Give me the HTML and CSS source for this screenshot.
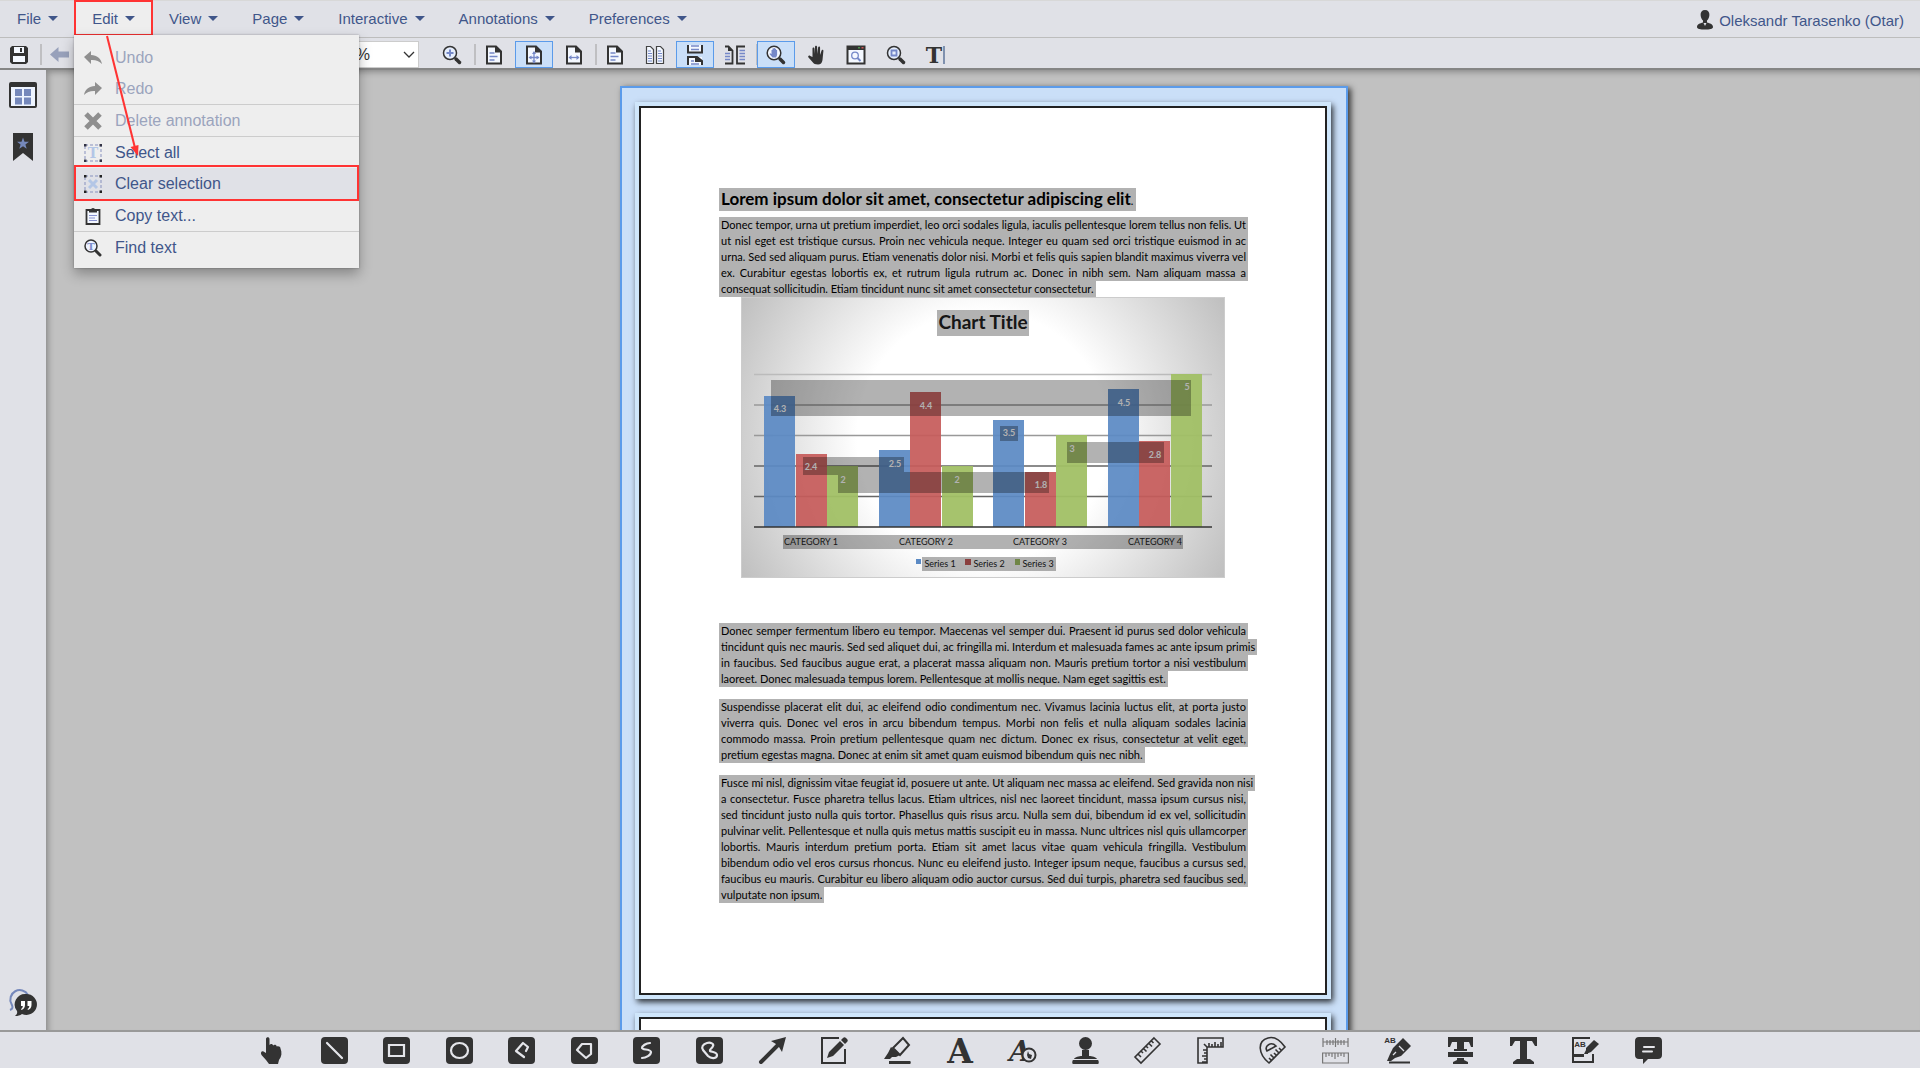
FILE: index.html
```html
<!DOCTYPE html>
<html lang="en">
<head>
    <meta charset="UTF-8">
    <title>Document viewer</title>
    <link rel="stylesheet" href="styles.css">
</head>
<body>
    <nav class="menubar">
        <button class="menu-btn">File</button>
        <button class="menu-btn open">Edit</button>
        <button class="menu-btn">View</button>
        <button class="menu-btn">Page</button>
        <button class="menu-btn">Interactive</button>
        <button class="menu-btn">Annotations</button>
        <button class="menu-btn">Preferences</button>
        <a class="user" href="#">
            <svg width="16" height="20" viewBox="0 0 16 20"><path fill="#333" d="M8 0c3 0 4.600 2 4.400 5-.2 2.800-1.400 4.600-2.400 5.600v2c3 .8 6 1.600 6 4.400 0 2-3.500 2.600-8 2.600S0 19 0 17c0-2.800 3-3.600 6-4.400v-2C5 9.600 3.800 7.800 3.600 5 3.400 2 5 0 8 0z"/><path fill="#e0e1e7" d="M6.500 13h3L8 16z"/></svg>
            <span>Oleksandr Tarasenko (Otar)</span>
        </a>
    </nav>

    <div class="dropdown">
        <button class="item" disabled><svg viewBox="0 0 18 18"><path fill="#8f8f8f" d="M0 8l7-6v4c6 .2 10 3.500 11 9-3-3.200-6-4.200-11-4v4z"/></svg>Undo</button>
        <button class="item" disabled><svg viewBox="0 0 18 18"><path fill="#8f8f8f" d="M18 8l-7-6v4C5 6.200 1 9.500 0 15c3-3.200 6-4.200 11-4v4z"/></svg>Redo</button>
        <hr>
        <button class="item" disabled><svg viewBox="0 0 18 18"><path stroke="#8f8f8f" stroke-width="5" d="M2 2l14 14M16 2L2 16"/></svg>Delete annotation</button>
        <hr>
        <button class="item"><svg viewBox="0 0 18 18"><path fill="none" stroke="#8791be" stroke-dasharray="3 2" d="M1 1h16v16H1z"/><path fill="#334" d="M0 0h2.500v2.500H0zM15.500 0H18v2.500h-2.500zM0 15.500h2.500V18H0zM15.500 15.500H18V18h-2.500z"/><text class="serif" x="9" y="14" font-size="14" fill="#b3c6e6">T</text></svg>Select all</button>
        <button class="item marked"><svg viewBox="0 0 18 18"><path fill="none" stroke="#8791be" stroke-dasharray="3 2" d="M1 1h16v16H1z"/><path fill="#222" d="M0 0h2.500v2.500H0zM15.500 0H18v2.500h-2.500zM0 15.500h2.500V18H0zM15.500 15.500H18V18h-2.500z"/><path stroke="#b3c6e6" stroke-width="3" d="M5 5l8 8M13 5l-8 8"/></svg>Clear selection</button>
        <button class="item"><svg viewBox="0 0 18 18"><path fill="#f4f8ff" stroke="#333" stroke-width="1.800" d="M2.500 3h13v14h-13z"/><path fill="#333" d="M5 5.500V3h2a2 2 0 0 1 4 0h2v2.500z"/><path stroke="#8791d0" stroke-width="1.200" d="M5 8.500h8M5 11h6M5 13.500h8"/></svg>Copy text...</button>
        <hr>
        <button class="item"><svg viewBox="0 0 18 18"><circle cx="7" cy="7" r="6" fill="#eef3ff" stroke="#333" stroke-width="1.500"/><path stroke="#333" stroke-width="3" stroke-linecap="round" d="M12 12l4 4"/><text class="serif" x="7" y="11" font-size="10" fill="#7d8ecb">T</text></svg>Find text</button>
    </div>
    <svg class="arrow" viewBox="0 0 40 124"><path stroke="#f33" stroke-width="2" d="M5 1l28 112"/><path fill="#f33" d="M28.500 112l8-2-.5 11z"/></svg>

    <div class="toolbar">
        <button class="tool" aria-label="Save"><svg viewBox="0 0 20 20"><path fill="#333" d="M3 1h14l2 2v14l-2 2H3l-2-2V3z"/><path fill="#f4f8ff" d="M5 2h10v6H5zM4 11h12v6H4z"/><path fill="#333" d="M11 3h2v4h-2z"/></svg></button>
        <i class="sep"></i>
        <button class="tool" aria-label="Previous"><svg viewBox="0 0 20 20"><path fill="#98a1bb" d="M0 9.500L8.500 2v4.500H19v6H8.500V17z"/></svg></button>
        <select class="zoom" aria-label="Zoom"><option>100%</option></select>
        <button class="tool wide" aria-label="Zoom in"><svg viewBox="0 0 20 20"><circle cx="8" cy="8" r="6.500" fill="#e6eefc" stroke="#333" stroke-width="1.500"/><path stroke="#333" stroke-width="3.500" stroke-linecap="round" d="M14 14l3.500 3.500"/><path stroke="#7588c8" stroke-width="2" d="M4.500 8h7M8 4.500v7"/></svg></button>
        <i class="sep"></i>
        <button class="tool" aria-label="Actual size"><svg viewBox="0 0 20 20"><path fill="#f4f8ff" stroke="#333" stroke-width="2" d="M3 1.500h9l5 5v12H3z"/><path fill="#333" d="M11 1l6.500 6.500H11z"/><path stroke="#7588c8" stroke-width="1.500" d="M5.500 8h5M5.500 11.500h8M5.500 15h5"/></svg></button>
        <button class="tool on" aria-label="Fit page"><svg viewBox="0 0 20 20"><path fill="#f4f8ff" stroke="#333" stroke-width="2" d="M3 1.500h9l5 5v12H3z"/><path fill="#333" d="M11 1l6.500 6.500H11z"/><path stroke="#7588c8" stroke-width="1.300" d="M10 7.500v10M5.500 12.500h9"/><path fill="#7588c8" d="M10 6l2 3H8zM10 18.500l2-3H8zM4.500 12.500l3-2v4zM15.500 12.500l-3-2v4z"/></svg></button>
        <button class="tool" aria-label="Fit width"><svg viewBox="0 0 20 20"><path fill="#f4f8ff" stroke="#333" stroke-width="2" d="M3 1.500h9l5 5v12H3z"/><path fill="#333" d="M11 1l6.500 6.500H11z"/><path stroke="#7588c8" stroke-width="1.300" d="M5.500 12.500h9"/><path fill="#7588c8" d="M4.500 12.500l3-2.500v5zM15.500 12.500l-3-2.500v5z"/></svg></button>
        <i class="sep"></i>
        <button class="tool" aria-label="Single page"><svg viewBox="0 0 20 20"><path fill="#f4f8ff" stroke="#333" stroke-width="2" d="M3 1.500h9l5 5v12H3z"/><path fill="#333" d="M11 1l6.500 6.500H11z"/><path stroke="#7588c8" stroke-width="1.500" d="M5.500 8h5M5.500 11.500h8M5.500 15h5"/></svg></button>
        <button class="tool" aria-label="Two pages"><svg viewBox="0 0 20 20"><path fill="#f4f8ff" stroke="#444" stroke-width="1.200" d="M1.500 1.500h4l3 3v14h-7zM11.500 1.500h4l3 3v14h-7z"/><path stroke="#7588c8" d="M3 6h3M3 8.500h4M3 11h4M3 13.500h4M3 16h4M13 6h3M13 8.500h4M13 11h4M13 13.500h4M13 16h4"/></svg></button>
        <button class="tool on" aria-label="Continuous"><svg viewBox="0 0 20 20"><path fill="#f4f8ff" d="M3 0h14v8H3zM3 12h14v8H3z"/><path fill="none" stroke="#333" stroke-width="2" d="M3 0v7.500h14V0M3 20v-8h9l5 4v4"/><path fill="#333" d="M10 12h3l4 5h-7z"/><path stroke="#7588c8" stroke-width="1.500" d="M6 1h8M6 4.500h8M6 16h3M6 19h8"/></svg></button>
        <button class="tool" aria-label="Continuous two pages"><svg viewBox="0 0 20 20"><path fill="none" stroke="#333" stroke-width="1.800" d="M0 1.500h3.500l4 4v13H0M20 1.500h-8v17h8"/><path fill="#333" d="M3 1l5 5H3z"/><path stroke="#7588c8" stroke-width="1.300" d="M0 8.500h5M0 11.500h5M0 14.500h5M14.500 5.500H20M14.500 8.500H20M14.500 11.500H20M14.500 14.500H20"/></svg></button>
        <i class="sep"></i>
        <button class="tool on" aria-label="Pan and zoom"><svg viewBox="0 0 20 20"><circle cx="8" cy="8" r="6.800" fill="#f4f8ff" stroke="#333" stroke-width="1.500"/><path stroke="#333" stroke-width="3.500" stroke-linecap="round" d="M14 14l3.500 3.500"/><path fill="#7588c8" d="M5.500 5h1V3.500h1.200V3h1.200v.8h1.200V5h1v5l-1 2.500H6.500L3.500 9l.6-.8 1.400.8z"/></svg></button>
        <button class="tool" aria-label="Pan"><svg viewBox="0 0 20 20"><path fill="#333" d="M6.500 12V3.500c0-1.500 1.900-1.500 2 0L9 9V2c0-1.600 2-1.600 2.100 0l.3 7 .7-6.500c.2-1.400 2-1.200 2 .2L14 10l1.600-4.500c.4-1.400 2-.9 1.800.4L16.500 15c-.4 3-2 4.500-4.500 4.500-3 0-4-.7-5.500-2.500L2.500 12.500c-1-1.300.5-2.500 1.800-1.600z"/></svg></button>
        <button class="tool" aria-label="Zoom window"><svg viewBox="0 0 20 20"><path fill="#f4f8ff" stroke="#333" stroke-width="2" d="M1.500 1.500h17v17h-17z"/><path fill="#333" d="M1 1h18v4H1z"/><path fill="#4a8f4a" d="M12 2h2v1.500h-2z"/><path fill="#c55" d="M15.500 2h2v1.500h-2z"/><circle cx="9" cy="10.500" r="3.300" fill="none" stroke="#7588c8" stroke-width="1.300"/><path stroke="#7588c8" stroke-width="2" d="M11.500 13l3 3"/></svg></button>
        <button class="tool" aria-label="Zoom region"><svg viewBox="0 0 20 20"><circle cx="8" cy="8" r="6.500" fill="#e6eefc" stroke="#333" stroke-width="1.500"/><path stroke="#333" stroke-width="3.500" stroke-linecap="round" d="M14 14l3.500 3.500"/><path fill="none" stroke="#7588c8" stroke-width="1.800" d="M5.500 5.500h5v5h-5z"/></svg></button>
        <button class="tool" aria-label="Select text"><svg viewBox="0 0 20 20"><text class="serif" x="8" y="18" font-size="22" fill="#333">T</text><path stroke="#7588a8" stroke-width="1.800" d="M18 1v18"/></svg></button>
    </div>

    <div class="main">
        <aside class="sidebar">
            <button class="side-btn" aria-label="Thumbnails"><svg width="28" height="26" viewBox="0 0 28 26"><rect x="1" y="1" width="26" height="24" rx="1" fill="#eef4ff" stroke="#333" stroke-width="2"/><path fill="#333" d="M1 1h26v4H1z"/><path fill="#7588bb" d="M6 7h7v7H6zM15 7h7v7h-7zM6 15.500h7v7H6zM15 15.500h7v7h-7z"/></svg></button>
            <button class="side-btn" aria-label="Bookmarks"><svg width="22" height="28" viewBox="0 0 22 28"><path fill="#333" d="M1 0h20v28l-10-8-10 8z"/><path fill="#7588bb" d="M11 4.500l1.500 4.200 4.500.1-3.600 2.700 1.300 4.300-3.700-2.600-3.700 2.600 1.300-4.300L5 8.800l4.500-.1z"/></svg></button>
            <button class="side-btn last" aria-label="Comments"><svg width="28" height="28" viewBox="0 0 28 28"><path fill="none" stroke="#7588bb" stroke-width="2" d="M1 22c3-1 3-3 1.500-6A9 9 0 1 1 19 7"/><path fill="#333" d="M17 6a10.500 10.500 0 1 1-4 20c-2 1.500-4 2-7 2 2-1.500 2.500-3 2-5A10.500 10.500 0 0 1 17 6z"/><path fill="#fff" d="M12 13h4v4c0 2.500-1.500 4.500-3.500 5l-.5-1c1.200-.6 1.700-1.700 1.800-3H12zM18.500 13h4v4c0 2.500-1.500 4.500-3.500 5l-.5-1c1.200-.6 1.700-1.700 1.800-3h-1.800z"/></svg></button>
        </aside>

        <div class="workspace">
            <div class="spread">
                <div class="sheet"><div class="paper">
                    <h1 class="title">Lorem ipsum dolor sit amet, consectetur adipiscing elit<small>.</small></h1>
                    <p class="text">
                        <span>Donec tempor, urna ut pretium imperdiet, leo orci sodales ligula, iaculis pellentesque lorem tellus non felis. Ut</span>
                        <span>ut nisl eget est tristique cursus. Proin nec vehicula neque. Integer eu quam sed orci tristique euismod in ac</span>
                        <span>urna. Sed sed aliquam purus. Etiam venenatis dolor nisi. Morbi et felis quis sapien blandit maximus viverra vel</span>
                        <span>ex. Curabitur egestas lobortis ex, et rutrum ligula rutrum ac. Donec in nibh sem. Nam aliquam massa a</span>
                        <span>consequat sollicitudin. Etiam tincidunt nunc sit amet consectetur consectetur.</span>
                    </p>
                    <!-- chart: 5 units = 152px, baseline at y=230 -->
                    <svg class="chart" viewBox="0 0 484 281">
                        <defs>
                            <radialGradient id="bg" gradientUnits="userSpaceOnUse" cx="242" cy="140" r="280">
                                <stop offset="0" stop-color="#fff"/>
                                <stop offset=".45" stop-color="#fff"/>
                                <stop offset="1" stop-color="#bebebe"/>
                            </radialGradient>
                        </defs>
                        <rect width="484" height="281" fill="url(#bg)"/>
                        <rect x=".5" y=".5" width="483" height="280" fill="none" stroke="#ccc"/>
                        <path stroke="#bbb" stroke-width="1.500" d="M13 77.500h458"/>
                        <path stroke="#999" stroke-width="1.500" d="M13 108h458M13 138.500h458"/>
                        <path stroke="#666" stroke-width="1.500" d="M13 169h458M13 199.500h458"/>
                        <g fill="#5b8ac4" fill-opacity=".93">
                            <rect x="23" y="99" width="31" height="131"/><rect x="138" y="153" width="31" height="77"/>
                            <rect x="252" y="123" width="31" height="107"/><rect x="367" y="92" width="31" height="138"/>
                        </g>
                        <g fill="#c65b5a" fill-opacity=".93">
                            <rect x="55" y="157" width="31" height="73"/><rect x="169" y="95" width="31" height="135"/>
                            <rect x="284" y="175" width="31" height="55"/><rect x="398" y="144" width="31" height="86"/>
                        </g>
                        <g fill="#a1c065" fill-opacity=".95">
                            <rect x="86" y="169" width="31" height="61"/><rect x="201" y="169" width="31" height="61"/>
                            <rect x="315" y="138" width="31" height="92"/><rect x="430" y="77" width="31" height="153"/>
                        </g>
                        <path stroke="#333" stroke-width="1.500" d="M13 230h458"/>
                        <g class="values">
                            <text x="39" y="115">4.3</text><text x="70" y="173">2.4</text><text x="102" y="186">2</text>
                            <text x="154" y="170">2.5</text><text x="185" y="112">4.4</text><text x="216" y="186">2</text>
                            <text x="268" y="139">3.5</text><text x="300" y="191">1.8</text><text x="331" y="155">3</text>
                            <text x="383" y="109">4.5</text><text x="414" y="161">2.8</text><text x="446" y="93">5</text>
                        </g>
                        <g class="labels">
                            <text x="70" y="248">CATEGORY 1</text><text x="185" y="248">CATEGORY 2</text>
                            <text x="299" y="248">CATEGORY 3</text><text x="414" y="248">CATEGORY 4</text>
                            <text x="199" y="270">Series 1</text><text x="248" y="270">Series 2</text><text x="297" y="270">Series 3</text>
                        </g>
                        <path fill="#5b8ac4" d="M175 262h5v5h-5z"/>
                        <path fill="#c65b5a" d="M224 262h6v6h-6z"/>
                        <path fill="#a1c065" d="M274 262h5v6h-5z"/>
                        <text class="chart-title" x="242" y="32">Chart Title</text>
                        <!-- text selection -->
                        <path fill-opacity=".3" d="M196 13h92v26h-92zM30 83h420v36H30zM62 160h101v15h145v21H97v-18H62zM259 129h18v15h-18zM326 145h97v21h-97zM42 238h400v14H42zM181 260h134v14H181z"/>
                    </svg>
                    <p class="text">
                        <span>Donec semper fermentum libero eu tempor. Maecenas vel semper dui. Praesent id purus sed dolor vehicula</span>
                        <span>tincidunt quis nec mauris. Sed sed aliquet dui, ac fringilla mi. Interdum et malesuada fames ac ante ipsum primis</span>
                        <span>in faucibus. Sed faucibus augue erat, a placerat massa aliquam non. Mauris pretium tortor a nisi vestibulum</span>
                        <span>laoreet. Donec malesuada tempus lorem. Pellentesque at mollis neque. Nam eget sagittis est.</span>
                    </p>
                    <p class="text">
                        <span>Suspendisse placerat elit dui, ac eleifend odio condimentum nec. Vivamus lacinia luctus elit, at porta justo</span>
                        <span>viverra quis. Donec vel eros in arcu bibendum tempus. Morbi non felis et nulla aliquam sodales lacinia</span>
                        <span>commodo massa. Proin pretium pellentesque quam nec dictum. Donec ex risus, consectetur at velit eget,</span>
                        <span>pretium egestas magna. Donec at enim sit amet quam euismod bibendum quis nec nibh.</span>
                    </p>
                    <p class="text">
                        <span>Fusce mi nisl, dignissim vitae feugiat id, posuere ut ante. Ut aliquam nec massa ac eleifend. Sed gravida non nisi</span>
                        <span>a consectetur. Fusce pharetra tellus lacus. Etiam ultrices, nisl nec laoreet tincidunt, massa ipsum cursus nisi,</span>
                        <span>sed tincidunt justo nulla quis tortor. Phasellus quis risus arcu. Nulla sem dui, bibendum id ex vel, sollicitudin</span>
                        <span>pulvinar velit. Pellentesque et nulla quis metus mattis suscipit eu in massa. Nunc ultrices nisl quis ullamcorper</span>
                        <span>lobortis. Mauris interdum pretium porta. Etiam sit amet lacus vitae quam vehicula fringilla. Vestibulum</span>
                        <span>bibendum odio vel eros cursus rhoncus. Nunc eu eleifend justo. Integer ipsum neque, faucibus a cursus sed,</span>
                        <span>faucibus eu mauris. Curabitur eu libero aliquam odio auctor cursus. Sed dui turpis, pharetra sed faucibus sed,</span>
                        <span>vulputate non ipsum.</span>
                    </p>
                </div></div>
                <div class="sheet"><div class="paper"></div></div>
            </div>
        </div>
    </div>

    <footer class="annobar">
        <div class="anno-tools">
            <button aria-label="Select"><svg viewBox="0 0 27 27"><path fill="#333" d="M8 16V2c0-2.500 3.500-2.500 3.500 0v6c1-1.500 3.300-1 3.700.5 1.200-1.200 3.300-.6 3.600 1 1.500-.8 3.700 0 3.700 2 1.600 4 1.300 8-1.500 11.500L20 27h-9l-3-4-4.500-5c-1.500-3 .5-4.500 2-3.500z"/></svg></button>
            <button aria-label="Line"><svg viewBox="0 0 27 27"><rect width="27" height="27" rx="4" fill="#333"/><path stroke="#e4e5ea" stroke-width="2.200" stroke-linecap="round" d="M6 6l15 15"/></svg></button>
            <button aria-label="Rectangle"><svg viewBox="0 0 27 27"><rect width="27" height="27" rx="4" fill="#333"/><path fill="none" stroke="#e4e5ea" stroke-width="2.200" d="M6 8h15v11H6z"/></svg></button>
            <button aria-label="Ellipse"><svg viewBox="0 0 27 27"><rect width="27" height="27" rx="4" fill="#333"/><ellipse cx="13.500" cy="13.500" rx="8.500" ry="7.500" fill="none" stroke="#e4e5ea" stroke-width="2.200"/></svg></button>
            <button aria-label="Polyline"><svg viewBox="0 0 27 27"><rect width="27" height="27" rx="4" fill="#333"/><path fill="none" stroke="#e4e5ea" stroke-width="2.200" stroke-linecap="round" stroke-linejoin="round" d="M16 20l-8-6 7-8 5 4-2 4"/></svg></button>
            <button aria-label="Polygon"><svg viewBox="0 0 27 27"><rect width="27" height="27" rx="4" fill="#333"/><path fill="none" stroke="#e4e5ea" stroke-width="2.200" stroke-linejoin="round" d="M11 7h9v10l-5 4-9-8z"/></svg></button>
            <button aria-label="Curve"><svg viewBox="0 0 27 27"><rect width="27" height="27" rx="4" fill="#333"/><path fill="none" stroke="#e4e5ea" stroke-width="2.200" stroke-linecap="round" d="M17 6c-4 0-8 3-8 5s9 1 9 4-5 6-9 6"/></svg></button>
            <button aria-label="Closed curve"><svg viewBox="0 0 27 27"><rect width="27" height="27" rx="4" fill="#333"/><path fill="none" stroke="#e4e5ea" stroke-width="2.200" d="M11 6c4-1 7 1 6 3-1 3-4 3-3 5 2 1 7 1 7 4 0 4-6 4-9 1l-5-6c-2-3 0-6 4-7z"/></svg></button>
            <button aria-label="Arrow"><svg viewBox="0 0 27 27"><path stroke="#333" stroke-width="4" stroke-linecap="round" d="M2 25L19 8"/><path fill="#333" d="M27 0l-4 15-3-5-3-3-5-3z"/></svg></button>
            <button aria-label="Note"><svg viewBox="0 0 27 27"><path fill="none" stroke="#333" stroke-width="2" d="M18 1H1v25h23V12"/><path fill="#333" d="M8 15L19 4l4 4-11 11-6 2zM20 3l2-2c1-1 2-1 3 0l1 1c1 1 1 2 0 3l-2 2z"/></svg></button>
            <button aria-label="Marker"><svg viewBox="0 0 27 27"><path fill="none" stroke="#333" stroke-width="2" d="M9 11L19 1l6 7-9 10z"/><path fill="#333" d="M7 10l9 8-4 2-4 0-2 2H0l4-6zM5 24h21c1 0 1 3 0 3H5z"/></svg></button>
            <button aria-label="Text"><svg viewBox="0 0 27 27"><text class="serif" x="14" y="26" font-size="33" fill="#333">A</text></svg></button>
            <button aria-label="Text stamp"><svg viewBox="0 0 27 27"><text class="serif" x="11" y="24" font-size="28" fill="#333" font-style="italic">A</text><circle cx="20" cy="18" r="6.500" fill="#e0e1e7" stroke="#333" stroke-width="2"/><path fill="#333" d="M19 14l1 3 3 1-1 4-3-1-1-3z"/></svg></button>
            <button aria-label="Stamp"><svg viewBox="0 0 27 27"><circle cx="13.500" cy="6.500" r="6.500" fill="#333"/><path fill="#333" d="M10 13h7v6c3 0 7 1 8 3H2c1-2 5-3 8-3zM1 23h25c1 1 1 4 0 4H1c-1 0-1-3 0-4z"/></svg></button>
            <button aria-label="Ruler"><svg viewBox="0 0 27 27"><path fill="none" stroke="#333" stroke-width="1.600" d="M20 1l6 6L7 26l-6-6zM4 17l3 3M7 14l2 2M9.500 11.500l3 3M12 9l2 2M15 6.500l3 3M17.500 4l2 2"/></svg></button>
            <button aria-label="Corner ruler"><svg viewBox="0 0 27 27"><path fill="none" stroke="#333" stroke-width="1.600" d="M1 1h25v9H10v16H1zM10 10L7 7M12 10V6M15 10V7M18 10V5M21 10V7M24 10V5M10 13H6M10 16H7M10 19H5M10 22H7M10 25H5"/></svg></button>
            <button aria-label="Protractor"><svg viewBox="0 0 27 27"><path fill="none" stroke="#333" stroke-width="1.600" d="M26 10L10 26C-1 17-2 4 9 1c7-2 12 2 17 9zM8 14c-3-5 4-10 9-5zM22 13l-2-2M19.500 15.500l-3-3M17 18l-2-2M14.500 20.500l-3-3M12 23l-2-2"/></svg></button>
            <button aria-label="Calibrate"><svg viewBox="0 0 27 27"><path fill="none" stroke="#777" stroke-width="1.200" d="M1 1v9M26 1v9M1 5h25M5 3v5M8 3v5M11 3v5M13.500 1v9M16 3v5M19 3v5M22 3v5M.6 16h25.800v10H.6zM4 16v4M7 16v3M10 16v4M13 16v6M16 16v4M19 16v3M22 16v4"/></svg></button>
            <button aria-label="Highlight text"><svg viewBox="0 0 27 27"><text class="sans" x="6" y="6" font-size="8">AB</text><path fill="#333" d="M9 11L19 1l8 8-10 10-6 2-4 3H3l3-7z"/><path stroke="#333" stroke-width="2" d="M5 25.500h21"/><path stroke="#e0e1e7" stroke-width="1.300" d="M15 9l5 5M9 18l3-3"/></svg></button>
            <button aria-label="Strike text"><svg viewBox="0 0 27 27"><path fill="#333" d="M1 0h25v10h-2l-2-5h-5v7h3v2H7v-2h3V5H5l-2 5H1zM1 15h25v5H1zM10 21h7v2l4 2v2H6v-2l4-2z"/></svg></button>
            <button aria-label="Underline text"><svg viewBox="0 0 27 27"><path fill="#333" d="M0 0h27v9h-2l-3-5h-5v18h3l4 3v2H3v-2l4-3h3V4H5L2 9H0z"/></svg></button>
            <button aria-label="Replace text"><svg viewBox="0 0 27 27"><path fill="none" stroke="#333" stroke-width="2" d="M18 1H1v24h20v-8"/><text class="sans" x="8" y="10" font-size="8">AB</text><path fill="#333" d="M1 17h11v3H1zM14 11l8-8 5 4-8 8-5 2zM14 13h2v4h-4z"/></svg></button>
            <button aria-label="Comment"><svg viewBox="0 0 27 27"><path fill="#333" d="M4 0h19c2.500 0 4 1.500 4 4v14c0 2.500-1.500 4-4 4H13l-5 5v-5H4c-2.500 0-4-1.500-4-4V4c0-2.500 1.500-4 4-4z"/><path stroke="#e4e5ea" stroke-width="2" stroke-linecap="round" d="M9 10h10M8 14.500h9"/></svg></button>
        </div>
    </footer>
</body>
</html>
```

FILE: styles.css
```css
* { box-sizing: border-box; }
body {
    margin: 0;
    height: 100vh;
    display: flex;
    flex-direction: column;
    overflow: hidden;
    font-family: "Liberation Sans", Arial, sans-serif;
    font-size: 16px;
    color: #40568a;
    background-color: #e0e1e7;
}
button {
    font: inherit;
    color: inherit;
    background: none;
    border: 0;
    padding: 0;
}
svg { display: block; overflow: visible; }
.serif {
    font-family: "DejaVu Serif", serif;
    font-weight: bold;
    text-anchor: middle;
}
.sans {
    font-family: "Liberation Sans", sans-serif;
    font-weight: bold;
    text-anchor: middle;
    fill: #333;
}

/* menu bar */
.menubar {
    display: flex;
    height: 38px;
    border-top: 1px solid #d8d8d8;
    border-bottom: 1px solid #bdbdbd;
    font-size: 15px;
    flex-shrink: 0;
}
.menu-btn {
    display: flex;
    align-items: center;
    gap: 7px;
    padding: 0 17px;
    height: 34px;
}
.menu-btn::after {
    content: "";
    border: 5px solid transparent;
    border-top-color: #40568a;
    border-bottom: 0;
}
.menu-btn.open {
    background-color: #eee;
    outline: 2px solid #f33;
    outline-offset: -1px;
}
.user {
    display: flex;
    align-items: center;
    gap: 6px;
    height: 38px;
    margin-left: auto;
    padding-right: 16px;
    color: inherit;
    text-decoration: none;
}

/* edit menu */
.dropdown {
    position: absolute;
    z-index: 2;
    top: 35px;
    left: 74px;
    width: 285px;
    padding: 7px 0 5px;
    background-color: #eee;
    box-shadow: 0 6px 12px rgba(0, 0, 0, .3), 0 0 2px rgba(0, 0, 0, .3);
}
.dropdown hr {
    margin: 0;
    border: 0;
    height: 1px;
    background-color: #ccc;
}
.item {
    display: flex;
    align-items: center;
    gap: 13px;
    width: 100%;
    height: 31px;
    padding-left: 10px;
}
.item:disabled { color: #9ba4bd; }
.item svg { width: 18px; height: 18px; }
.item.marked {
    position: relative;
    height: 32px;
    background-color: #e0e1e7;
}
.item.marked::after {
    content: "";
    position: absolute;
    inset: -3px 0 -1px;
    border: 2px solid #f33;
}
.arrow {
    position: absolute;
    z-index: 3;
    top: 35px;
    left: 102px;
    width: 40px;
    height: 124px;
}

/* toolbar */
.toolbar {
    display: flex;
    align-items: center;
    gap: 2px;
    height: 32px;
    padding-top: 3px;
    border-bottom: 2px solid #858585;
    flex-shrink: 0;
}
.tool {
    display: flex;
    align-items: center;
    justify-content: center;
    width: 38px;
    height: 27px;
    border: 1px solid transparent;
}
.tool.wide { width: 40px; }
.tool.on {
    background-color: #cadff8;
    border-color: #5b9bea;
}
.tool svg { width: 20px; height: 20px; }
.sep {
    width: 2px;
    height: 21px;
    margin-right: -3px;
    background-color: #bfbfc2;
}
.zoom {
    appearance: none;
    width: 96px;
    height: 27px;
    margin: 0 11px 0 242px;
    padding: 0 5px;
    border: 1px solid #ccc;
    font: inherit;
    color: #333;
    background: #fff url("data:image/svg+xml,%3Csvg xmlns='http://www.w3.org/2000/svg' width='12' height='8'%3E%3Cpath d='M1 1l5 5 5-5' fill='none' stroke='%23333' stroke-width='1.3'/%3E%3C/svg%3E") no-repeat right 3px center;
}

/* document area */
.main {
    display: flex;
    flex: 1;
    min-height: 0;
}
.sidebar {
    display: flex;
    flex-direction: column;
    align-items: center;
    gap: 25px;
    width: 46px;
    padding: 12px 0 14px;
}
.side-btn.last { margin-top: auto; }
.workspace {
    flex: 1;
    display: flex;
    justify-content: center;
    align-items: flex-start;
    padding: 16px 0 0 2px;
    overflow: hidden;
    background-color: #c1c1c1;
    box-shadow: inset 4px 4px 6px -2px rgba(0, 0, 0, .3);
}
.spread {
    display: flex;
    flex-direction: column;
    gap: 14px;
    width: 728px;
    padding: 14px 15px 14px 13px;
    border: 2px solid #5b9bea;
    background-color: #cadff8;
    box-shadow: 3px 2px 6px rgba(0, 0, 0, .7);
}
.sheet {
    padding: 4px;
    background-color: #cfe6fb;
    box-shadow: 2px 3px 6px rgba(0, 0, 0, .8);
}
.paper {
    min-height: 120px;
    padding: 80px 77px 90px 78px;
    border: 2px solid #222;
    background-color: #fff;
    color: #000;
    font-family: Lato, Carlito, sans-serif;
}
.title {
    width: fit-content;
    height: 23px;
    margin: 0 0 6px;
    padding: 0 3px 0 2px;
    font-size: 17px;
    line-height: 22px;
    white-space: nowrap;
    background-color: #b2b2b2;
}
.title small { font-size: 11px; font-weight: normal; }
.text {
    margin: 0 0 12px;
    font-size: 11px;
    line-height: 16px;
}
.text span {
    display: block;
    width: max-content;
    min-width: 100%;
    padding: 0 2px;
    text-align-last: justify;
    white-space: nowrap;
    background-color: #b2b2b2;
}
.text span:last-child { min-width: 0; }
.title + .text, .text:last-child { margin: 0; }
.chart {
    width: 484px;
    height: 281px;
    margin: 0 0 45px 22px;
}
.chart text { text-anchor: middle; }
.chart .chart-title { font-size: 19px; font-weight: bold; fill: #222; }
.values { font-size: 9px; font-weight: bold; fill: #fff; }
.labels { font-size: 9px; fill: #222; }

/* annotation bar */
.annobar {
    padding: 5px 24px 4px;
    border-top: 2px solid #999;
    background-color: #e0e1e7;
    flex-shrink: 0;
}
.anno-tools {
    display: flex;
    justify-content: space-between;
    max-width: 1404px;
    margin: 0 auto;
}
.anno-tools svg { width: 27px; height: 27px; }
```
